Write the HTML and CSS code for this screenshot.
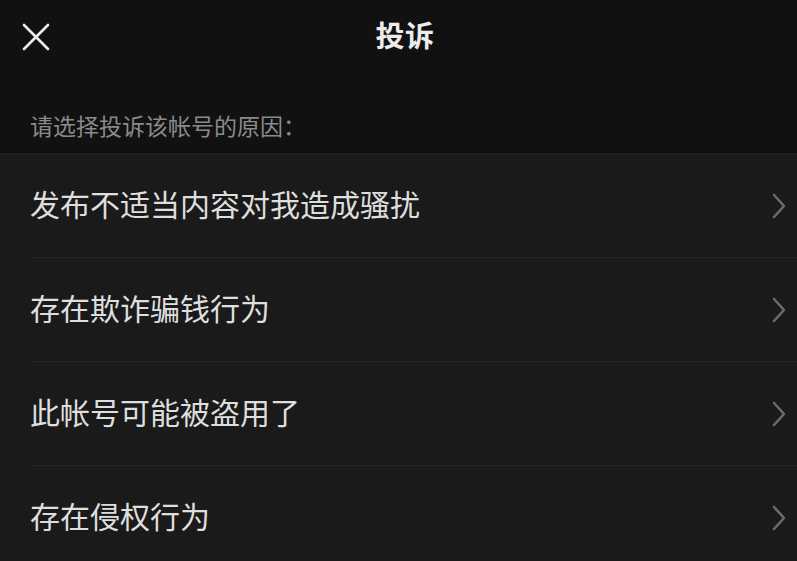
FILE: index.html
```html
<!DOCTYPE html>
<html lang="zh-CN">
<head>
<meta charset="utf-8">
<title>投诉</title>
<link rel="stylesheet" href="styles.css">
</head>
<body>
<div class="page">
  <header class="top">
    <div class="nav">
      <div class="nav-left">
        <svg class="close" width="28" height="28" viewBox="0 0 28 28" aria-hidden="true">
          <path d="M2 2 L26 26 M26 2 L2 26" stroke="#ececec" stroke-width="2.6" stroke-linecap="round" fill="none"/>
        </svg>
      </div>
      <div class="title">投诉</div>
      <div class="nav-right"></div>
    </div>
    <div class="hint">请选择投诉该帐号的原因：</div>
  </header>
  <ul class="list">
    <li class="item"><span class="label">发布不适当内容对我造成骚扰</span><svg class="chev" width="14" height="26" viewBox="0 0 14 26"><path d="M2 2 L12 13 L2 24" stroke="#6b6b6b" stroke-width="2.6" fill="none" stroke-linecap="round" stroke-linejoin="round"/></svg></li>
    <li class="item"><span class="label">存在欺诈骗钱行为</span><svg class="chev" width="14" height="26" viewBox="0 0 14 26"><path d="M2 2 L12 13 L2 24" stroke="#6b6b6b" stroke-width="2.6" fill="none" stroke-linecap="round" stroke-linejoin="round"/></svg></li>
    <li class="item"><span class="label">此帐号可能被盗用了</span><svg class="chev" width="14" height="26" viewBox="0 0 14 26"><path d="M2 2 L12 13 L2 24" stroke="#6b6b6b" stroke-width="2.6" fill="none" stroke-linecap="round" stroke-linejoin="round"/></svg></li>
    <li class="item"><span class="label">存在侵权行为</span><svg class="chev" width="14" height="26" viewBox="0 0 14 26"><path d="M2 2 L12 13 L2 24" stroke="#6b6b6b" stroke-width="2.6" fill="none" stroke-linecap="round" stroke-linejoin="round"/></svg></li>
  </ul>
</div>
</body>
</html>
```

FILE: styles.css
```css
* { box-sizing: border-box; }
html, body {
  margin: 0;
  padding: 0;
  background: #1a1a1a;
  height: 100%;
  overflow: hidden;
}
body {
  font-family: "Noto Sans CJK SC", "Noto Sans", sans-serif;
  color: #e0e0e0;
}
.page {
  width: 797px;
  min-height: 561px;
  background: #1a1a1a;
}
.top {
  background: #111111;
  border-bottom: 1px solid #0a0a0a;
}
.nav {
  height: 74px;
  display: grid;
  grid-template-columns: 1fr auto 1fr;
  align-items: center;
  padding-left: 13px;
}
.nav-left {
  display: flex;
  align-items: center;
  padding-left: 9px;
}
.close { display: block; }
.title {
  font-size: 29px;
  line-height: 29px;
  padding-bottom: 6px;
  font-weight: 700;
  color: #ececec;
  letter-spacing: 0.5px;
}
.hint {
  padding: 40px 0 15px 30px;
  font-size: 23px;
  line-height: 23px;
  color: #8a8a8a;
}
.list {
  list-style: none;
  margin: 0;
  padding: 0;
  border-top: 1px solid #232323;
}
.item {
  margin-left: 30px;
  height: 103px;
  display: flex;
  align-items: center;
  justify-content: space-between;
  padding-right: 11px;
}
.item + .item {
  height: 104px;
  border-top: 1px solid #262626;
}
.label {
  font-size: 30px;
  line-height: 30px;
  padding-bottom: 6px;
  color: #dedede;
}
.chev { display: block; }
```
